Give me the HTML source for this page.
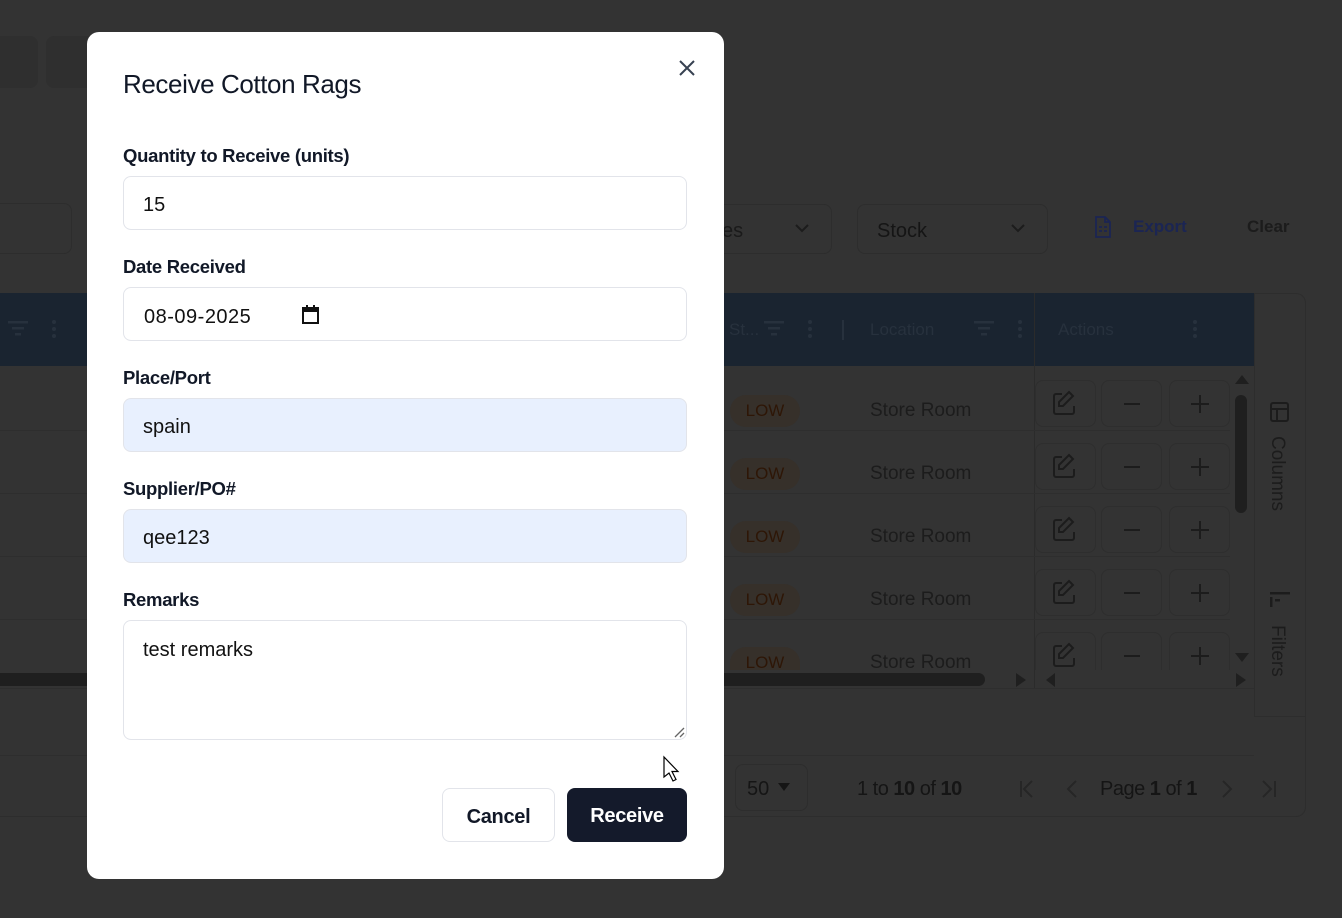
<!DOCTYPE html>
<html><head><meta charset="utf-8"><style>
*{box-sizing:border-box;margin:0;padding:0}
body{width:1342px;height:918px;overflow:hidden;background:#333;font-family:"Liberation Sans",sans-serif;position:relative}
.a{position:absolute}
.btn{position:absolute;border:1px solid #2e2e2e;border-radius:8px;height:47px;width:61px}
.m{position:absolute;left:87px;top:32px;width:637px;height:847px;background:#fff;border-radius:12px}
.lbl{position:absolute;left:36px;font-size:18.5px;color:#111827;font-weight:bold;letter-spacing:-0.3px}
.inp{position:absolute;left:36px;width:564px;height:54px;border:1px solid #e2e4ea;border-radius:8px;font-size:20px;color:#111;padding:17px 0 0 19px;background:#fff}
.af{background:#e8f0fe}
</style></head><body>
<div class="a" style="left:0;top:36px;width:38px;height:52px;background:#2f2f2f;border-radius:0 8px 8px 0"></div>
<div class="a" style="left:46px;top:36px;width:60px;height:52px;background:#2f2f2f;border-radius:8px"></div>
<div class="a" style="left:0;top:203px;width:72px;height:51px;border:1px solid #2d2d2d;border-left:none;border-radius:0 8px 8px 0"></div>
<div class="a" style="left:700px;top:204px;width:132px;height:50px;border:1px solid #2d2d2d;border-radius:8px"></div>
<div class="a" style="left:722px;top:220px;font-size:20px;color:#1a1a1a">es</div>
<svg class="a" style="left:794px;top:222px" width="16" height="12"><path d="M2 3l6 6 6-6" stroke="#1c1c1c" stroke-width="2" fill="none"/></svg>
<div class="a" style="left:857px;top:204px;width:191px;height:50px;border:1px solid #2d2d2d;border-radius:8px"></div>
<div class="a" style="left:877px;top:220px;font-size:20px;color:#151515">Stock</div>
<svg class="a" style="left:1010px;top:222px" width="16" height="12"><path d="M2 3l6 6 6-6" stroke="#1c1c1c" stroke-width="2" fill="none"/></svg>
<svg class="a" style="left:1093px;top:215px" width="20" height="24"><path d="M3 2h9l5 5v15H3z M12 2v5h5 M6 12h3M11 12h3M6 16h3M11 16h3" stroke="#1b2553" stroke-width="1.8" fill="none"/></svg>
<div class="a" style="left:1133px;top:217px;font-size:17px;color:#1b2553;font-weight:bold">Export</div>
<div class="a" style="left:1247px;top:217px;font-size:17px;color:#1c1c1c;font-weight:bold">Clear</div>
<div class="a" style="left:0;top:293px;width:1306px;height:524px;border:1px solid #2d2d2d;border-left:none;border-radius:0 10px 10px 0"></div>
<div class="a" style="left:0;top:293px;width:1254px;height:73px;background:#1a2430"></div>
<div class="a" style="left:1034px;top:293px;width:1px;height:395px;background:#2b2b2b"></div>
<div class="a" style="left:1254px;top:293px;width:1px;height:424px;background:#2d2d2d"></div>
<div class="a" style="left:1254px;top:716px;width:51px;height:1px;background:#2d2d2d"></div>
<div class="a" style="left:729px;top:320px;font-size:17px;color:#27313d">St...</div>
<div class="a" style="left:870px;top:320px;font-size:17px;color:#27313d">Location</div>
<div class="a" style="left:1058px;top:320px;font-size:17px;color:#27313d">Actions</div>
<svg class="a" style="left:0;top:318px" width="1254" height="24" fill="#27313d">
<rect x="8" y="3" width="20" height="2.5"/><rect x="12" y="9" width="12" height="2.5"/><rect x="15" y="15" width="6" height="2.5"/>
<circle cx="54" cy="4" r="2"/><circle cx="54" cy="11" r="2"/><circle cx="54" cy="18" r="2"/>
<rect x="764" y="3" width="20" height="2.5"/><rect x="768" y="9" width="12" height="2.5"/><rect x="771" y="15" width="6" height="2.5"/>
<circle cx="810" cy="4" r="2"/><circle cx="810" cy="11" r="2"/><circle cx="810" cy="18" r="2"/>
<rect x="842" y="2" width="2" height="20"/>
<rect x="974" y="3" width="20" height="2.5"/><rect x="978" y="9" width="12" height="2.5"/><rect x="981" y="15" width="6" height="2.5"/>
<circle cx="1020" cy="4" r="2"/><circle cx="1020" cy="11" r="2"/><circle cx="1020" cy="18" r="2"/>
<circle cx="1195" cy="4" r="2"/><circle cx="1195" cy="11" r="2"/><circle cx="1195" cy="18" r="2"/>
</svg>
<div class="a" style="left:0;top:430px;width:1230px;height:1px;background:#2e2e2e"></div>
<div class="a" style="left:0;top:493px;width:1230px;height:1px;background:#2e2e2e"></div>
<div class="a" style="left:0;top:556px;width:1230px;height:1px;background:#2e2e2e"></div>
<div class="a" style="left:0;top:619px;width:1230px;height:1px;background:#2e2e2e"></div>
<div class="a" style="left:0;top:688px;width:1254px;height:1px;background:#2e2e2e"></div>
<div class="a" style="left:0;top:755px;width:1254px;height:1px;background:#2e2e2e"></div>

<div class="a" style="left:730px;top:395px;width:70px;height:32px;border-radius:16px;background:#36302a;color:#2e1606;font-size:17px;text-align:center;line-height:32px">LOW</div>
<div class="a" style="left:870px;top:400px;font-size:19px;color:#1c1c1c">Store Room</div>
<div class="a" style="left:730px;top:458px;width:70px;height:32px;border-radius:16px;background:#36302a;color:#2e1606;font-size:17px;text-align:center;line-height:32px">LOW</div>
<div class="a" style="left:870px;top:463px;font-size:19px;color:#1c1c1c">Store Room</div>
<div class="a" style="left:730px;top:521px;width:70px;height:32px;border-radius:16px;background:#36302a;color:#2e1606;font-size:17px;text-align:center;line-height:32px">LOW</div>
<div class="a" style="left:870px;top:526px;font-size:19px;color:#1c1c1c">Store Room</div>
<div class="a" style="left:730px;top:584px;width:70px;height:32px;border-radius:16px;background:#36302a;color:#2e1606;font-size:17px;text-align:center;line-height:32px">LOW</div>
<div class="a" style="left:870px;top:589px;font-size:19px;color:#1c1c1c">Store Room</div>
<div class="a" style="left:730px;top:647px;width:70px;height:23px;border-radius:16px 16px 0 0;background:#36302a;color:#2e1606;font-size:17px;text-align:center;line-height:32px;overflow:hidden">LOW</div>
<div class="a" style="left:870px;top:652px;font-size:19px;color:#1c1c1c;height:20px;overflow:hidden">Store Room</div>

<div class="a" style="left:1035px;top:370px;width:200px;height:300px;overflow:hidden">
<div class="btn" style="left:0;top:10px"></div><div class="btn" style="left:66px;top:10px"></div><div class="btn" style="left:134px;top:10px"></div>
<div class="btn" style="left:0;top:73px"></div><div class="btn" style="left:66px;top:73px"></div><div class="btn" style="left:134px;top:73px"></div>
<div class="btn" style="left:0;top:136px"></div><div class="btn" style="left:66px;top:136px"></div><div class="btn" style="left:134px;top:136px"></div>
<div class="btn" style="left:0;top:199px"></div><div class="btn" style="left:66px;top:199px"></div><div class="btn" style="left:134px;top:199px"></div>
<div class="btn" style="left:0;top:262px"></div><div class="btn" style="left:66px;top:262px"></div><div class="btn" style="left:134px;top:262px"></div>
</div>
<svg class="a" style="left:1035px;top:380px" width="200" height="300" stroke="#1c1c1c" stroke-width="2" fill="none">
<g id="r"><path d="M27 14h-6a2 2 0 0 0-2 2v16a2 2 0 0 0 2 2h16a2 2 0 0 0 2-2v-6 M34 12l4 4-10 10h-4v-4z"/><path d="M89 24h16 M165 15v18M156 24h18"/></g>
<use href="#r" y="63"/><use href="#r" y="126"/><use href="#r" y="189"/><use href="#r" y="252"/>
</svg>
<div class="a" style="left:1235px;top:395px;width:12px;height:118px;border-radius:6px;background:#1f1f1f"></div>
<svg class="a" style="left:1233px;top:372px" width="18" height="320" fill="#1f1f1f"><path d="M2 12l7-9 7 9z M2 281l7 9 7-9z M3 301l10 7-10 7z"/></svg>
<div class="a" style="left:0;top:673px;width:985px;height:13px;border-radius:0 7px 7px 0;background:#1f1f1f"></div>
<svg class="a" style="left:1012px;top:670px" width="60" height="20" fill="#1f1f1f"><path d="M4 3l10 7-10 7z M34 10l9-7v14z"/></svg>
<svg class="a" style="left:1269px;top:401px" width="22" height="22" fill="none" stroke="#1c1c1c" stroke-width="2"><rect x="2" y="2" width="17" height="18" rx="2"/><path d="M2 8h17M8 8v12"/></svg>
<div class="a" style="left:1266px;top:436px;font-size:19px;color:#1c1c1c;writing-mode:vertical-rl">Columns</div>
<svg class="a" style="left:1269px;top:590px" width="22" height="20" fill="#1c1c1c"><rect x="1" y="2" width="20" height="2.5"/><rect x="1" y="7" width="2.5" height="10"/><rect x="6" y="9" width="5" height="2.5"/></svg>
<div class="a" style="left:1266px;top:625px;font-size:19px;color:#1c1c1c;writing-mode:vertical-rl">Filters</div>
<div class="a" style="left:735px;top:764px;width:73px;height:47px;border:1px solid #2d2d2d;border-radius:8px"></div>
<div class="a" style="left:747px;top:778px;font-size:20px;color:#151515">50</div>
<svg class="a" style="left:777px;top:782px" width="14" height="10"><path d="M1 1h12l-6 8z" fill="#151515"/></svg>
<div class="a" style="left:857px;top:778px;font-size:20px;color:#151515;letter-spacing:-0.5px">1 to <b>10</b> of <b>10</b></div>
<svg class="a" style="left:1018px;top:778px" width="270" height="22" stroke="#262626" stroke-width="2" fill="none"><path d="M3 3v16M14 3l-8 8 8 8 M58 3l-8 8 8 8 M205 3l8 8-8 8 M245 3l8 8-8 8M257 3v16"/></svg>
<div class="a" style="left:1100px;top:778px;font-size:20px;color:#151515;letter-spacing:-0.5px">Page <b>1</b> of <b>1</b></div>

<div class="m">
<div class="a" style="left:36px;top:37px;font-size:26px;color:#111827;letter-spacing:-0.4px">Receive Cotton Rags</div>
<svg class="a" style="left:591px;top:27px" width="18" height="18" stroke="#374151" stroke-width="2"><path d="M2 2l14 14M16 2L2 16"/></svg>
<div class="lbl" style="top:113px">Quantity to Receive (units)</div>
<div class="inp" style="top:144px">15</div>
<div class="lbl" style="top:224px">Date Received</div>
<div class="inp" style="top:255px;padding-left:20px;letter-spacing:0.5px;padding-top:18px">08-09-2025</div>
<svg class="a" style="left:214px;top:272px" width="20" height="22"><rect x="2" y="4" width="15" height="15" stroke="#111" stroke-width="2" fill="none"/><rect x="2" y="4" width="15" height="4" fill="#111"/><rect x="5" y="1" width="2" height="4" fill="#111"/><rect x="12" y="1" width="2" height="4" fill="#111"/></svg>
<div class="lbl" style="top:335px">Place/Port</div>
<div class="inp af" style="top:366px">spain</div>
<div class="lbl" style="top:446px">Supplier/PO#</div>
<div class="inp af" style="top:477px">qee123</div>
<div class="lbl" style="top:557px">Remarks</div>
<div class="inp" style="top:588px;height:120px;padding-top:18px">test remarks</div>
<svg class="a" style="left:586px;top:694px" width="12" height="12" stroke="#666" stroke-width="1.3"><path d="M2 11L11 2M7 11l4-4"/></svg>
<div class="a" style="left:355px;top:756px;width:113px;height:54px;border:1px solid #e2e4ea;border-radius:8px;font-size:20px;font-weight:bold;color:#111827;text-align:center;line-height:56px;letter-spacing:-0.3px">Cancel</div>
<div class="a" style="left:480px;top:756px;width:120px;height:54px;background:#141a2b;border-radius:8px;font-size:20px;font-weight:bold;color:#fff;text-align:center;line-height:56px;letter-spacing:-0.3px">Receive</div>
<svg class="a" style="left:575px;top:723px" width="22" height="30"><path d="M2 2v20l5-4 4 8 3-1.5-4-8h6z" fill="#fff" stroke="#000" stroke-width="1.2"/></svg>
</div>
</body></html>
